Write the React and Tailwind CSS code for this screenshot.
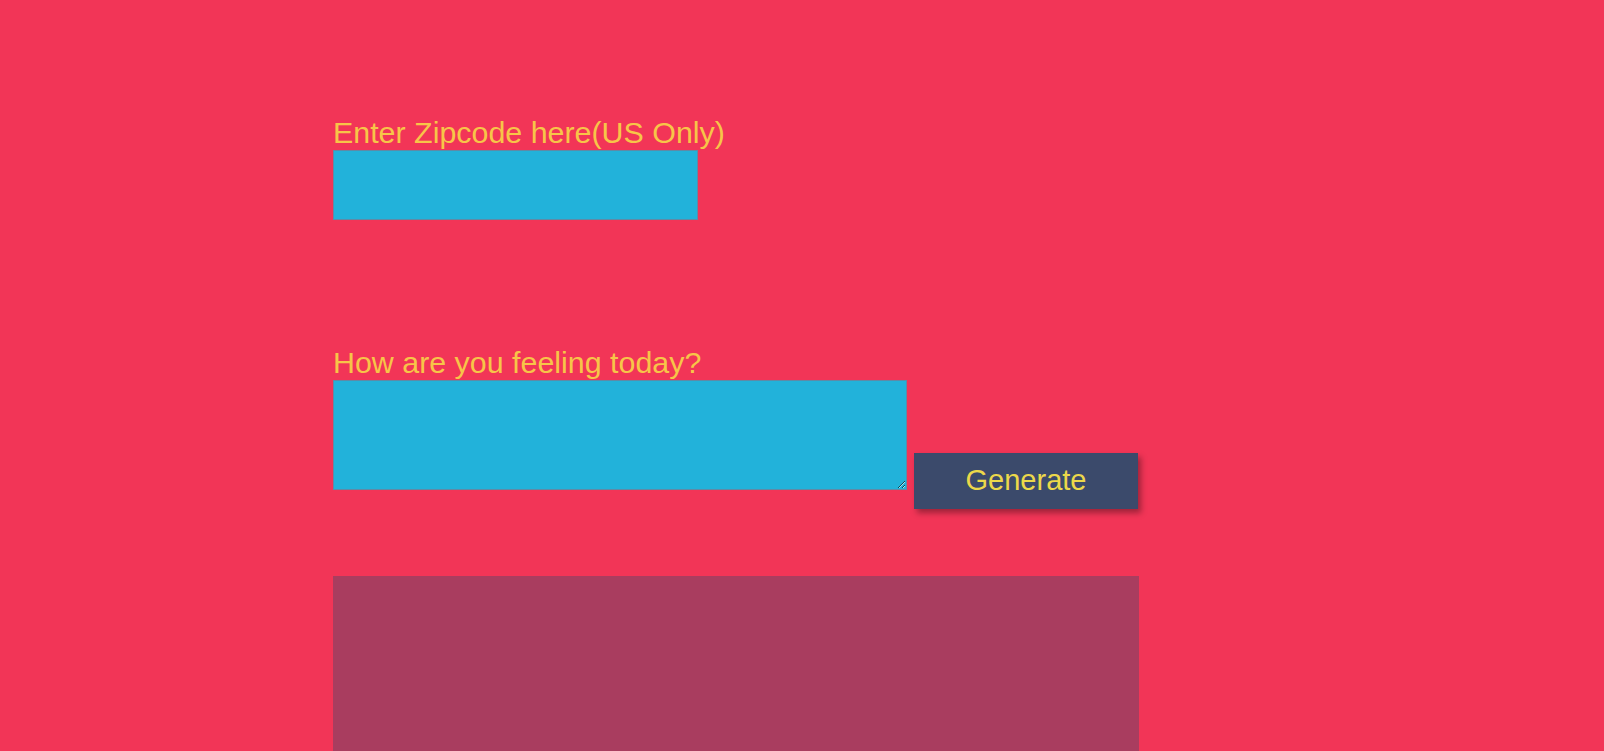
import React from "react";

export default function App() {
  return (
    <div className="min-h-screen w-full bg-[#f23557] overflow-hidden font-['Liberation_Sans',Arial,sans-serif]">
      <div className="ml-[333px] w-[806px] pt-[115px] flex flex-col">
        <label className="block text-[30.4px] leading-[35px] text-[#f7c548]">
          Enter Zipcode here(US Only)
        </label>
        <input
          type="text"
          className="block w-[365px] h-[70px] bg-[#22b2da] border border-[#5f8aa6] outline-none"
        />

        <label className="block mt-[125px] text-[30.4px] leading-[35px] text-[#f7c548]">
          How are you feeling today?
        </label>
        <div className="flex items-start gap-[7px]">
          <textarea className="block w-[574px] h-[110px] bg-[#22b2da] border border-[#5f8aa6] outline-none" />
          <button className="mt-[73px] w-[224px] h-[56px] bg-[#3b4a6b] text-[#ecd84a] text-[29px] shadow-[3px_4px_6px_rgba(0,0,0,0.35)]">
            Generate
          </button>
        </div>

        <div className="mt-[67px] w-[806px] h-[300px] bg-[#a93d5f]" />
      </div>
    </div>
  );
}
